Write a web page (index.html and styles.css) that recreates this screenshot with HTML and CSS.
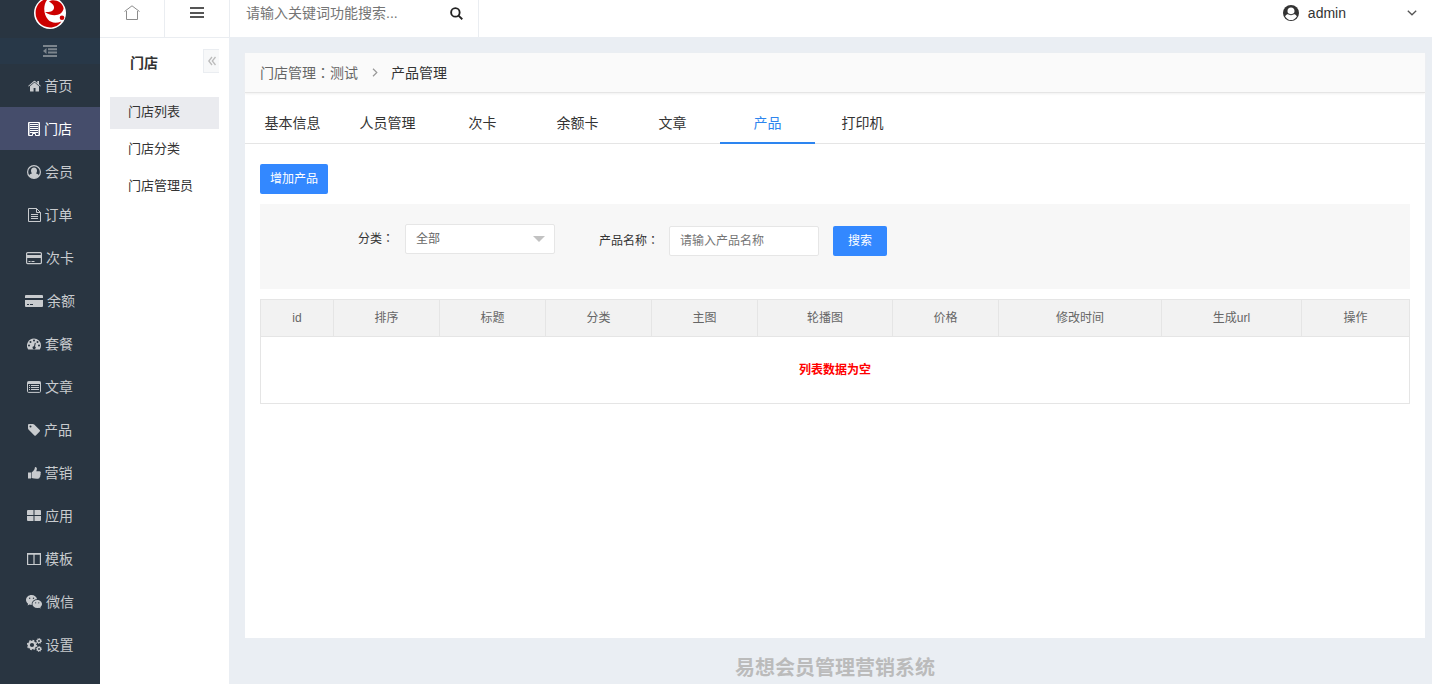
FILE: index.html
```html
<!DOCTYPE html>
<html lang="zh-CN">
<head>
<meta charset="utf-8">
<title>产品管理</title>
<link rel="stylesheet" href="styles.css">
</head>
<body>
<div class="app">
  <aside class="sidebar">
    <a class="logo" href="#" aria-label="首页">
      <svg width="32" height="29" viewBox="0 3 32 29">
        <circle cx="16" cy="16" r="16" fill="#fff"/>
        <path d="M14 1.700C6.500 2.500 1.600 8.500 1.600 16c0 8 6.400 14.400 14.400 14.400 5 0 9-2.300 11.400-6C22 26.500 17 26 14 22.500 9.500 17.500 8.500 8 14 1.700z" fill="#c00"/>
        <path d="M15 4.500C20 1 29 5 29.600 11.500 28.500 18.500 19 20.500 11 15c5.500.6 9.500-1.500 9-5.200-.5-2.700-3-3.800-5-5.300z" fill="#c00"/>
        <circle cx="28" cy="20.800" r="2.300" fill="#c00"/>
      </svg>
    </a>
    <button class="fold" type="button" aria-label="收起菜单">
      <svg width="14" height="12" viewBox="0 0 14 12" fill="currentColor"><path d="M0 0h14v2H0zM5 3.300h9v2H5zM5 6.600h9v2H5zM0 10h14v2H0zM3.500 3v6L0 6z"/></svg>
    </button>
    <nav class="menu">
      <a href="#"><svg width="13" height="14" viewBox="0 0 13 14" fill="currentColor"><path d="M6.500 3.500 2 7.300V12q0 .6.600.6h3V9h1.900v3.600h3q.5 0 .5-.6V7.300zM12.900 6.900 11 5.300V1.900H9.300v2L7.200 2q-.7-.5-1.400 0L.1 6.900l.6.700L6.500 2.700l5.800 4.900z"/></svg>首页</a>
      <a href="#" class="active"><svg width="12" height="14" viewBox="0 0 12 14"><path d="M.5.500h11v13h-4v-2h-3v2h-4z" fill="none" stroke="currentColor"/><path d="M2 2h8v1H2zM2 4h8v1H2zM2 6h8v1H2zM2 8h8v1H2zM2 10h8v1H2z" fill="currentColor"/><path d="M1 1h1v12H1zM10 1h1v12h-1z" fill="currentColor" opacity=".5"/></svg>门店</a>
      <a href="#"><svg width="14" height="14" viewBox="0 0 14 14"><circle cx="7" cy="7" r="6.400" fill="none" stroke="currentColor" stroke-width="1.200"/><path d="M7 2.600c2 0 3 1.400 3 3.100 0 1.200-.5 2.200-1 2.700 1.500.1 2.500.9 3 2.300-1.200 1.500-2.900 2.500-5 2.500s-3.800-1-5-2.500c.5-1.400 1.500-2.200 3-2.300-.5-.5-1-1.500-1-2.700 0-1.700 1-3.100 3-3.100z" fill="currentColor"/></svg>会员</a>
      <a href="#"><svg width="13" height="14" viewBox="0 0 13 14" fill="none" stroke="currentColor"><path d="M.5.500h8l4 4v9H.5zM8.500.500v4h4M3 6.500h7M3 8.500h7M3 10.500h7"/></svg>订单</a>
      <a href="#"><svg width="16" height="14" viewBox="0 0 16 14"><rect x=".6" y="1.600" width="14.800" height="11" rx="1" fill="none" stroke="currentColor" stroke-width="1.200"/><path d="M1 4h14v3H1zM2.500 10h2v1h-2zM5.500 10h3v1h-3z" fill="currentColor"/></svg>次卡</a>
      <a href="#"><svg width="18" height="14" viewBox="0 0 18 14" fill="currentColor"><path d="M1 1h16q1 0 1 1v2H0V2q0-1 1-1zM0 6h18v6q0 1-1 1H1q-1 0-1-1zM2 10v1h2v-1zM5 10v1h3v-1z" fill-rule="evenodd"/></svg>余额</a>
      <a href="#"><svg width="14" height="14" viewBox="0 0 14 14" fill="currentColor"><path fill-rule="evenodd" d="M7 1.500a7 7 0 0 1 7 7q0 2-1.100 3.800-.2.200-.4.200h-11q-.2 0-.4-.2A7 7 0 0 1 7 1.500zM2 7.500a1 1 0 1 0 0 2 1 1 0 0 0 0-2zM3.500 4a1 1 0 1 0 0 2 1 1 0 0 0 0-2zM7 2.500a1 1 0 1 0 0 2 1 1 0 0 0 0-2zM10.500 4a1 1 0 1 0 0 2 1 1 0 0 0 0-2zM12 7.500a1 1 0 1 0 0 2 1 1 0 0 0 0-2zM7.800 5.800 7 9.200a1.500 1.500 0 1 0 1 .3l.8-3.500z"/></svg>套餐</a>
      <a href="#"><svg width="14" height="14" viewBox="0 0 14 14"><rect x=".5" y="1.600" width="13" height="10.800" rx="1" fill="none" stroke="currentColor"/><path d="M.5 1.500h13V4H.500zM2 5h1v1H2zM4 5h8v1H4zM2 7h1v1H2zM4 7h8v1H4zM2 9h1v1H2zM4 9h8v1H4z" fill="currentColor"/></svg>文章</a>
      <a href="#"><svg width="12" height="14" viewBox="0 0 12 14" fill="currentColor"><path fill-rule="evenodd" d="M0 2q0-1 1-1h3.800q.8 0 1.400.6L11.700 7q.6.700 0 1.400l-3.900 4q-.7.600-1.400 0L.7 6.800Q0 6.200 0 5.300zM2.500 2.500a1 1 0 1 0 0 2 1 1 0 0 0 0-2z"/></svg>产品</a>
      <a href="#"><svg width="13" height="14" viewBox="0 0 13 14" fill="currentColor"><path d="M0 6.500h3v6H0zM3.600 6.500Q5.500 5 6.500 3.200L7 1q1.800-.2 1.900 1.600 0 1.200-.6 2.700h3.200q1.400.1 1.400 1.300 0 .7-.4 1 .5.900-.2 1.800.2 1-.5 1.600 0 1.600-1.800 1.700-3.500.2-6.400-.7z"/></svg>营销</a>
      <a href="#"><svg width="14" height="14" viewBox="0 0 14 14" fill="currentColor"><path d="M1 1h5.500v5H0V2q0-1 1-1zM7.500 1H13q1 0 1 1v4H7.500zM0 7h6.500v5H1q-1 0-1-1zM7.500 7H14v4q0 1-1 1H7.500z"/></svg>应用</a>
      <a href="#"><svg width="14" height="14" viewBox="0 0 14 14" fill="none" stroke="currentColor"><path d="M.6 1.600h12.800v10.900H.6zM7 2v10.500M.6 2.200h12.800" stroke-width="1.200"/></svg>模板</a>
      <a href="#"><svg width="16" height="14" viewBox="0 0 16 14" fill="currentColor"><path fill-rule="evenodd" d="M5.600 0C2.500 0 0 2.200 0 4.900c0 1.500.8 2.900 2.100 3.800L1.600 10.500l1.900-1q1.200.3 2.400.2C5.200 6.800 8 4.200 11.100 4.300 10.600 1.700 8.300 0 5.600 0zM3.700 2.600a.7.700 0 1 0 0 1.400.7.700 0 0 0 0-1.400zM7.500 2.600a.7.700 0 1 0 0 1.400.7.700 0 0 0 0-1.400zM11.200 5c2.600 0 4.800 1.800 4.800 4.100 0 1.200-.7 2.400-1.700 3.100l.4 1.400-1.500-.8q-1 .3-2 .3c-2.700 0-4.800-1.800-4.800-4S8.500 5 11.200 5zM9.700 7.200a.6.600 0 1 0 0 1.200.6.600 0 0 0 0-1.200zM12.800 7.200a.6.600 0 1 0 0 1.200.6.600 0 0 0 0-1.200z"/></svg>微信</a>
      <a href="#"><svg width="15" height="14" viewBox="0 0 15 14" fill="none" stroke="currentColor"><circle cx="5" cy="7" r="3.200" stroke-width="2.200"/><circle cx="5" cy="7" r="4.600" stroke-width="1.200" stroke-dasharray="1.810 1.800"/><circle cx="12" cy="3" r="1.600" stroke-width="1.300"/><circle cx="12" cy="3" r="2.500" stroke-dasharray="1 .96"/><circle cx="12" cy="11" r="1.600" stroke-width="1.300"/><circle cx="12" cy="11" r="2.500" stroke-dasharray="1 .96"/></svg>设置</a>
    </nav>
  </aside>

  <div class="workspace">
    <header class="topbar">
      <a class="tool" href="#" aria-label="主页"><svg width="16" height="15" viewBox="0 0 16 15" fill="none" stroke="#8c8c8c"><path d="M.5 6.500 8 .800l7.500 5.700M2.500 6v8.500h11V6"/></svg></a>
      <button class="tool" type="button" aria-label="菜单"><svg width="14" height="12" viewBox="0 0 14 12" fill="#555"><path d="M0 0h14v2H0zM0 5h14v2H0zM0 9h14v2H0z"/></svg></button>
      <form class="search">
        <input type="text" aria-label="搜索" placeholder="请输入关键词功能搜索...">
        <button type="button" aria-label="搜索"><svg width="13" height="13" viewBox="0 0 14 14" fill="none" stroke="#222" stroke-width="2"><circle cx="5.800" cy="5.800" r="4.600"/><path d="m9.200 9.200 4 4"/></svg></button>
      </form>
      <button class="user" type="button">
        <svg width="16" height="16" viewBox="0 0 16 16"><circle cx="8" cy="8" r="8" fill="#333"/><path d="M8 2.500c2.200 0 3.500 1.500 3.500 3.500 0 1.400-.6 2.400-1.200 3 1.800.2 3 1 3.600 2.400C12.200 13.800 10.300 15 8 15s-4.200-1.200-5.900-3.600C2.700 10 3.900 9.200 5.700 9 5.100 8.400 4.500 7.400 4.500 6c0-2 1.300-3.500 3.500-3.500z" fill="#fff"/><path d="M5 8.800q3 2 6 0" fill="none" stroke="#333"/></svg>
        <span>admin</span>
        <svg width="10" height="6" viewBox="0 0 10 6" fill="none" stroke="#555" stroke-width="1.300"><path d="m.800.800 4.200 4 4.200-4"/></svg>
      </button>
    </header>

    <div class="columns">
      <aside class="submenu">
        <div class="submenu-head">
          <h2>门店</h2>
          <button type="button" aria-label="收起"><svg width="8" height="10" viewBox="0 0 8 10" fill="none" stroke="#bbb" stroke-width="1.300"><path d="M4 1 .8 5 4 9M7.500 1 4.300 5l3.200 4"/></svg></button>
        </div>
        <nav>
          <a href="#" class="active">门店列表</a>
          <a href="#">门店分类</a>
          <a href="#">门店管理员</a>
        </nav>
      </aside>

      <main class="main">
        <section class="card">
          <div class="crumbs">
            <a href="#">门店管理<span class="colon" lang="zh-TW">：</span>测试</a>
            <svg width="6" height="9" viewBox="0 0 6 9" fill="none" stroke="#999" stroke-width="1.200"><path d="m1 .800 3.800 3.700L1 8.200"/></svg>
            <span>产品管理</span>
          </div>
          <nav class="tabs">
            <a href="#">基本信息</a><a href="#">人员管理</a><a href="#">次卡</a><a href="#">余额卡</a><a href="#">文章</a><a href="#" class="active">产品</a><a href="#">打印机</a>
          </nav>
          <div class="content">
            <button class="btn" type="button">增加产品</button>
            <form class="filter">
              <div class="field category">
                <label for="category">分类<span class="colon" lang="zh-TW">：</span></label>
                <div class="select">
                  <select id="category"><option>全部</option></select>
                  <svg width="12" height="6" viewBox="0 0 12 6" fill="#c2c2c2"><path d="M0 0h12L6 6z"/></svg>
                </div>
              </div>
              <div class="field name">
                <label for="name">产品名称<span class="colon" lang="zh-TW">：</span></label>
                <input id="name" type="text" placeholder="请输入产品名称">
                <button class="btn wide" type="button">搜索</button>
              </div>
            </form>
            <table class="list">
              <colgroup><col class="c-id"><col class="c-std"><col class="c-std"><col class="c-std"><col class="c-std"><col class="c-slides"><col class="c-std"><col class="c-time"><col class="c-url"><col class="c-act"></colgroup>
              <thead><tr><th>id</th><th>排序</th><th>标题</th><th>分类</th><th>主图</th><th>轮播图</th><th>价格</th><th>修改时间</th><th>生成url</th><th>操作</th></tr></thead>
              <tbody><tr><td colspan="10">列表数据为空</td></tr></tbody>
            </table>
          </div>
        </section>
        <footer class="footer">易想会员管理营销系统</footer>
      </main>
    </div>
  </div>
</div>
</body>
</html>
```
FILE: styles.css
```css
* { box-sizing: border-box; }
body {
  margin: 0;
  background: #eaeef3;
  color: #333;
  font: 14px/20px "Liberation Sans", "Noto Sans CJK SC", sans-serif;
}
a { color: inherit; text-decoration: none; }
button, input, select { margin: 0; padding: 0; border: 0; background: none; color: inherit; font: inherit; }
button { cursor: pointer; }
input::placeholder { color: #757575; opacity: 1; }
svg { display: block; flex: none; }
.colon { font-family: "Noto Sans CJK TC", sans-serif; line-height: 1; }

.app { display: flex; min-height: 100vh; }

.sidebar { flex: none; width: 100px; background: #293541; }
.logo { display: flex; justify-content: center; height: 38px; }
.fold {
  display: flex; align-items: center; justify-content: center;
  width: 100%; height: 26px; background: #283848; color: #7c858d;
}
.menu a {
  display: flex; align-items: center; justify-content: center; gap: 4px;
  height: 43px; color: #c8cbce;
}
.menu a.active { background: #454d6b; color: #fff; }

.workspace { flex: 1; min-width: 0; display: flex; flex-direction: column; }
.topbar { display: flex; height: 37px; background: #fff; }
.tool {
  display: flex; align-items: flex-start; justify-content: center;
  width: 65px; padding-top: 5px;
  border-right: 1px solid #eaedf1;
}
button.tool { padding-top: 7px; }
.search { display: flex; align-items: flex-start; width: 249px; border-right: 1px solid #eaedf1; }
.search input { flex: 1; min-width: 0; height: 26px; padding-left: 16px; outline: 0; }
.search button { padding: 7px 15px 0 0; }
.user { display: flex; align-items: center; height: 26px; margin-left: auto; padding-right: 15px; }
.user span { margin: 0 61px 0 9px; }

.columns { flex: 1; display: flex; }
.submenu { flex: none; width: 129px; padding: 11px 10px 0; border-top: 1px solid #eaedf1; background: #fff; }
.submenu-head { display: flex; justify-content: space-between; height: 48px; padding-left: 20px; }
.submenu h2 { margin: 0; font-size: 14px; line-height: 28px; }
.submenu-head button {
  display: flex; align-items: center; justify-content: center;
  width: 16px; height: 24px; border: 1px solid #eaedf1; border-right: 0; background: #f7f8f9;
}
.submenu nav { display: grid; gap: 5px; }
.submenu nav a { height: 32px; padding-left: 18px; font-size: 13px; line-height: 30px; }
.submenu nav a.active { background: #eaebef; }

.main { flex: 1; min-width: 0; display: flex; flex-direction: column; padding: 16px 7px 0 16px; }
.card { flex: 1; background: #fff; }
.crumbs {
  display: flex; align-items: center; height: 40px; padding: 0 15px;
  border-bottom: 1px solid #e5e5e5; background: #fafafa; box-shadow: 0 1px 2px #f0f0f0;
}
.crumbs a { color: #666; }
.crumbs svg { margin: 0 13px 0 14px; }
.tabs { display: flex; height: 51px; border-bottom: 1px solid #e5e5e5; }
.tabs a { width: 95px; height: 51px; padding-top: 10px; text-align: center; line-height: 40px; }
.tabs a.active { color: #2d85ee; border-bottom: 2px solid #2d85f0; }
.content { padding: 20px 15px; font-size: 12px; }
.btn { display: block; height: 30px; padding: 0 10px; border-radius: 2px; background: #3388ff; color: #fff; }
.btn.wide { width: 54px; margin-left: 14px; }
.filter { display: flex; height: 85px; margin: 10px 0; background: #f7f7f7; }
.field { display: flex; align-items: center; height: 30px; }
.field input, .field select {
  width: 150px; height: 30px; padding: 0 10px;
  border: 1px solid #e6e6e6; border-radius: 2px; background: #fff; color: #666;
}
.category { margin: 20px 44px 0 98px; }
.category label { width: 47px; }
.select { display: grid; align-items: center; }
.select select, .select svg { grid-area: 1 / 1; }
.select select { appearance: none; }
.select svg { justify-self: end; margin-right: 10px; pointer-events: none; }
.name { margin-top: 22px; }
.name label { width: 70px; }

.list { width: 100%; table-layout: fixed; border-collapse: collapse; color: #666; }
.list th, .list td { padding: 0; border: 1px solid #e5e5e5; text-align: center; }
.list th { height: 37px; background: #f2f2f2; font-weight: 400; }
.list td { height: 67px; color: #f00; font-weight: 700; }
.c-id { width: 73px; }
.c-std { width: 106px; }
.c-slides { width: 135px; }
.c-time { width: 163px; }
.c-url { width: 140px; }
.c-act { width: 108px; }

.footer { height: 46px; padding-top: 15px; color: #bbb; text-align: center; font-size: 20px; font-weight: 700; line-height: 30px; }
```
